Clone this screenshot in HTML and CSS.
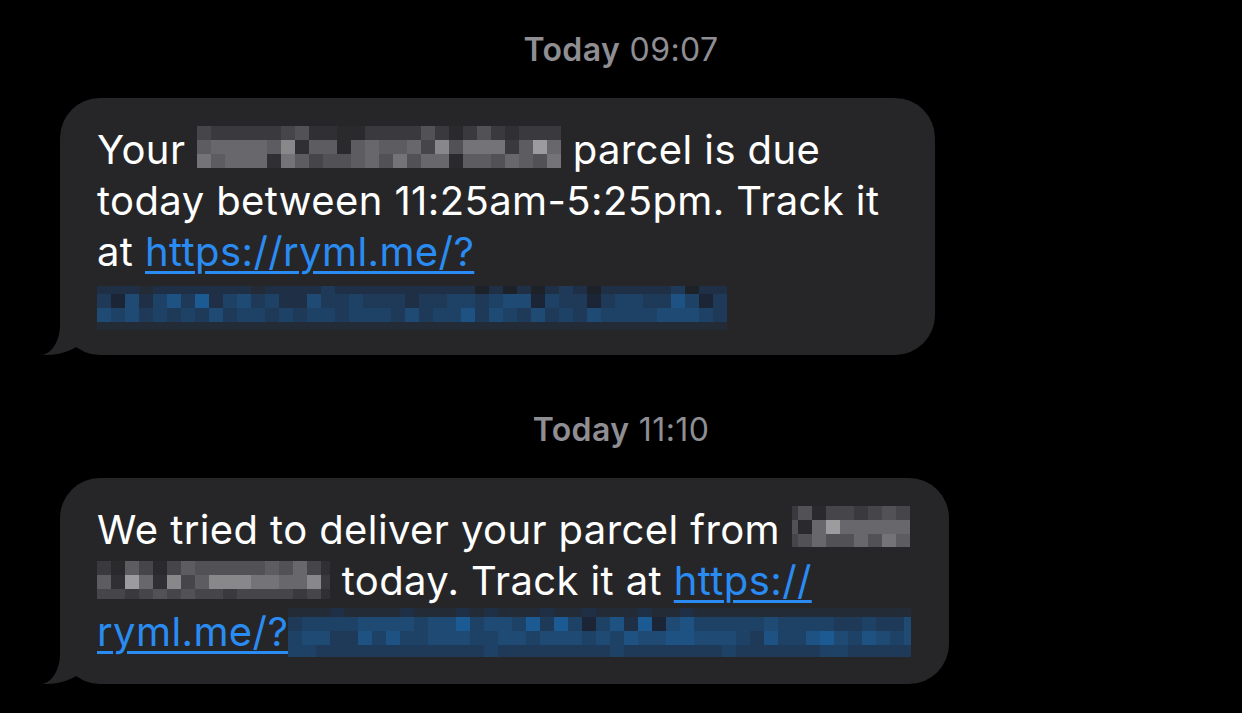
FILE: index.html
```html
<!DOCTYPE html>
<html lang="en">
<head>
<meta charset="utf-8">
<title>Messages</title>
<link rel="stylesheet" href="styles.css">
</head>
<body>
<main class="thread">
  <p class="stamp"><b>Today</b> 09:07</p>
  <div class="bubble bubble-a">
    <p class="msg">Your <span class="mosaic m1"><span class="cells"><i class="g3"></i><i class="g2"></i><i class="g2"></i><i class="g2"></i><i class="g2"></i><i class="g2"></i><i class="g3"></i><i class="g4"></i><i class="g1"></i><i class="g1"></i><i class="g0"></i><i class="g0"></i><i class="g2"></i><i class="g2"></i><i class="g2"></i><i class="g2"></i><i class="g4"></i><i class="g2"></i><i class="g0"></i><i class="g2"></i><i class="g4"></i><i class="g2"></i><i class="g1"></i><i class="g2"></i><i class="g2"></i><i class="g2"></i><i class="g5"></i><i class="g6"></i><i class="g6"></i><i class="g6"></i><i class="g6"></i><i class="g5"></i><i class="g8"></i><i class="g1"></i><i class="g5"></i><i class="g5"></i><i class="g0"></i><i class="g5"></i><i class="g6"></i><i class="g5"></i><i class="g5"></i><i class="g6"></i><i class="g3"></i><i class="g8"></i><i class="g4"></i><i class="g7"></i><i class="g7"></i><i class="g7"></i><i class="g2"></i><i class="g5"></i><i class="g9"></i><i class="g6"></i><i class="g7"></i><i class="g5"></i><i class="g6"></i><i class="g6"></i><i class="g6"></i><i class="g1"></i><i class="g7"></i><i class="g5"></i><i class="g3"></i><i class="g4"></i><i class="g4"></i><i class="g5"></i><i class="g6"></i><i class="g4"></i><i class="g7"></i><i class="g4"></i><i class="g6"></i><i class="g6"></i><i class="g0"></i><i class="g5"></i><i class="g5"></i><i class="g4"></i><i class="g6"></i><i class="g5"></i><i class="g4"></i><i class="g7"></i></span></span> parcel is due<br>today between 11:25am-5:25pm. Track it<br>at <a class="link" href="#">https://ryml.me/?</a><br><span class="mosaic m2"><span class="cells"><i class="b1"></i><i class="b1"></i><i class="b1"></i><i class="b0"></i><i class="b1"></i><i class="b1"></i><i class="b1"></i><i class="b1"></i><i class="b1"></i><i class="b1"></i><i class="b1"></i><i class="b0"></i><i class="b1"></i><i class="b1"></i><i class="b1"></i><i class="b1"></i><i class="b2"></i><i class="b1"></i><i class="b1"></i><i class="b1"></i><i class="b1"></i><i class="b1"></i><i class="b1"></i><i class="b1"></i><i class="b1"></i><i class="b1"></i><i class="b1"></i><i class="b7"></i><i class="b1"></i><i class="b7"></i><i class="b1"></i><i class="b7"></i><i class="b1"></i><i class="b2"></i><i class="b1"></i><i class="b7"></i><i class="b1"></i><i class="b1"></i><i class="b1"></i><i class="b1"></i><i class="b1"></i><i class="b2"></i><i class="b7"></i><i class="b1"></i><i class="b1"></i><i class="b2"></i><i class="b8"></i><i class="b4"></i><i class="b1"></i><i class="b3"></i><i class="b5"></i><i class="b2"></i><i class="b6"></i><i class="b1"></i><i class="b3"></i><i class="b4"></i><i class="b2"></i><i class="b3"></i><i class="b1"></i><i class="b1"></i><i class="b4"></i><i class="b2"></i><i class="b2"></i><i class="b3"></i><i class="b2"></i><i class="b2"></i><i class="b2"></i><i class="b1"></i><i class="b2"></i><i class="b2"></i><i class="b3"></i><i class="b3"></i><i class="b2"></i><i class="b3"></i><i class="b4"></i><i class="b4"></i><i class="b8"></i><i class="b3"></i><i class="b2"></i><i class="b2"></i><i class="b8"></i><i class="b2"></i><i class="b3"></i><i class="b3"></i><i class="b2"></i><i class="b2"></i><i class="b5"></i><i class="b3"></i><i class="b8"></i><i class="b2"></i><i class="b4"></i><i class="b3"></i><i class="b4"></i><i class="b2"></i><i class="b3"></i><i class="b2"></i><i class="b3"></i><i class="b2"></i><i class="b4"></i><i class="b2"></i><i class="b3"></i><i class="b3"></i><i class="b2"></i><i class="b3"></i><i class="b2"></i><i class="b3"></i><i class="b3"></i><i class="b2"></i><i class="b3"></i><i class="b3"></i><i class="b3"></i><i class="b2"></i><i class="b4"></i><i class="b2"></i><i class="b3"></i><i class="b3"></i><i class="b5"></i><i class="b2"></i><i class="b4"></i><i class="b3"></i><i class="b2"></i><i class="b4"></i><i class="b2"></i><i class="b3"></i><i class="b2"></i><i class="b4"></i><i class="b3"></i><i class="b3"></i><i class="b3"></i><i class="b3"></i><i class="b4"></i><i class="b4"></i><i class="b4"></i><i class="b3"></i><i class="b2"></i><i class="b0"></i><i class="b0"></i><i class="b0"></i><i class="b0"></i><i class="b0"></i><i class="b0"></i><i class="b0"></i><i class="b0"></i><i class="b0"></i><i class="b0"></i><i class="b0"></i><i class="b0"></i><i class="b0"></i><i class="b0"></i><i class="b0"></i><i class="b0"></i><i class="b0"></i><i class="b0"></i><i class="b0"></i><i class="b0"></i><i class="b0"></i><i class="b0"></i><i class="b0"></i><i class="b0"></i><i class="b0"></i><i class="b0"></i><i class="b0"></i><i class="b0"></i><i class="b0"></i><i class="b0"></i><i class="b0"></i><i class="b0"></i><i class="b0"></i><i class="b0"></i><i class="b0"></i><i class="b0"></i><i class="b0"></i><i class="b0"></i><i class="b0"></i><i class="b0"></i><i class="b0"></i><i class="b0"></i><i class="b0"></i><i class="b0"></i><i class="b0"></i></span></span></p>
    <svg class="tail" viewBox="0 0 60 50" aria-hidden="true"><path d="M17 0 L17 20 C17 35 10 47 0 50 C12 50.5 26 47 33 42 L33 0 Z"/></svg>
  </div>

  <p class="stamp later"><b>Today</b> 11:10</p>
  <div class="bubble bubble-b">
    <p class="msg">We tried to deliver your parcel from <span class="mosaic m3"><span class="cells"><i class="g2"></i><i class="g4"></i><i class="g0"></i><i class="g3"></i><i class="g3"></i><i class="g2"></i><i class="g3"></i><i class="g4"></i><i class="g3"></i><i class="g4"></i><i class="g0"></i><i class="g6"></i><i class="g9"></i><i class="g6"></i><i class="g6"></i><i class="g6"></i><i class="g6"></i><i class="g6"></i><i class="g3"></i><i class="g4"></i><i class="g6"></i><i class="g4"></i><i class="g4"></i><i class="g6"></i><i class="g4"></i><i class="g7"></i><i class="g5"></i></span></span><br><span class="mosaic m4"><span class="cells"><i class="g2"></i><i class="g0"></i><i class="g5"></i><i class="g3"></i><i class="g0"></i><i class="g3"></i><i class="g5"></i><i class="g4"></i><i class="g4"></i><i class="g4"></i><i class="g4"></i><i class="g4"></i><i class="g5"></i><i class="g4"></i><i class="g6"></i><i class="g3"></i><i class="g1"></i><i class="g5"></i><i class="g1"></i><i class="g9"></i><i class="g6"></i><i class="g1"></i><i class="g8"></i><i class="g3"></i><i class="g5"></i><i class="g8"></i><i class="g8"></i><i class="g8"></i><i class="g7"></i><i class="g7"></i><i class="g6"></i><i class="g6"></i><i class="g8"></i><i class="g2"></i><i class="g3"></i><i class="g3"></i><i class="g2"></i><i class="g3"></i><i class="g4"></i><i class="g3"></i><i class="g4"></i><i class="g3"></i><i class="g3"></i><i class="g2"></i><i class="g3"></i><i class="g3"></i><i class="g3"></i><i class="g3"></i><i class="g2"></i><i class="g3"></i><i class="g1"></i></span></span> today. Track it at <a class="link" href="#">https://</a><br><a class="link" href="#">ryml.me/?</a><span class="mosaic m5"><span class="cells"><i class="b0"></i><i class="b0"></i><i class="b0"></i><i class="b1"></i><i class="b0"></i><i class="b0"></i><i class="b0"></i><i class="b0"></i><i class="b1"></i><i class="b0"></i><i class="b0"></i><i class="b0"></i><i class="b1"></i><i class="b0"></i><i class="b1"></i><i class="b0"></i><i class="b0"></i><i class="b0"></i><i class="b1"></i><i class="b0"></i><i class="b0"></i><i class="b1"></i><i class="b0"></i><i class="b0"></i><i class="b0"></i><i class="b1"></i><i class="b0"></i><i class="b0"></i><i class="b1"></i><i class="b0"></i><i class="b0"></i><i class="b0"></i><i class="b0"></i><i class="b0"></i><i class="b0"></i><i class="b0"></i><i class="b0"></i><i class="b0"></i><i class="b0"></i><i class="b0"></i><i class="b0"></i><i class="b0"></i><i class="b0"></i><i class="b0"></i><i class="b0"></i><i class="b2"></i><i class="b3"></i><i class="b3"></i><i class="b3"></i><i class="b3"></i><i class="b4"></i><i class="b4"></i><i class="b4"></i><i class="b4"></i><i class="b3"></i><i class="b4"></i><i class="b4"></i><i class="b6"></i><i class="b3"></i><i class="b4"></i><i class="b4"></i><i class="b3"></i><i class="b6"></i><i class="b2"></i><i class="b6"></i><i class="b3"></i><i class="b8"></i><i class="b3"></i><i class="b5"></i><i class="b1"></i><i class="b6"></i><i class="b8"></i><i class="b4"></i><i class="b5"></i><i class="b3"></i><i class="b3"></i><i class="b3"></i><i class="b3"></i><i class="b3"></i><i class="b4"></i><i class="b3"></i><i class="b3"></i><i class="b3"></i><i class="b3"></i><i class="b2"></i><i class="b2"></i><i class="b3"></i><i class="b2"></i><i class="b2"></i><i class="b4"></i><i class="b3"></i><i class="b4"></i><i class="b4"></i><i class="b2"></i><i class="b2"></i><i class="b5"></i><i class="b3"></i><i class="b5"></i><i class="b3"></i><i class="b3"></i><i class="b4"></i><i class="b4"></i><i class="b4"></i><i class="b3"></i><i class="b3"></i><i class="b4"></i><i class="b4"></i><i class="b3"></i><i class="b4"></i><i class="b4"></i><i class="b4"></i><i class="b3"></i><i class="b4"></i><i class="b3"></i><i class="b5"></i><i class="b4"></i><i class="b4"></i><i class="b5"></i><i class="b5"></i><i class="b4"></i><i class="b4"></i><i class="b4"></i><i class="b3"></i><i class="b2"></i><i class="b5"></i><i class="b3"></i><i class="b3"></i><i class="b5"></i><i class="b6"></i><i class="b4"></i><i class="b3"></i><i class="b5"></i><i class="b4"></i><i class="b3"></i><i class="b4"></i><i class="b3"></i><i class="b3"></i><i class="b2"></i><i class="b2"></i><i class="b2"></i><i class="b2"></i><i class="b2"></i><i class="b2"></i><i class="b2"></i><i class="b2"></i><i class="b2"></i><i class="b2"></i><i class="b2"></i><i class="b2"></i><i class="b3"></i><i class="b2"></i><i class="b2"></i><i class="b2"></i><i class="b2"></i><i class="b2"></i><i class="b2"></i><i class="b2"></i><i class="b2"></i><i class="b3"></i><i class="b2"></i><i class="b2"></i><i class="b2"></i><i class="b2"></i><i class="b2"></i><i class="b2"></i><i class="b2"></i><i class="b3"></i><i class="b2"></i><i class="b2"></i><i class="b2"></i><i class="b2"></i><i class="b2"></i><i class="b2"></i><i class="b3"></i><i class="b3"></i><i class="b2"></i><i class="b2"></i><i class="b2"></i><i class="b2"></i><i class="b2"></i></span></span></p>
    <svg class="tail" viewBox="0 0 60 50" aria-hidden="true"><path d="M17 0 L17 20 C17 35 10 47 0 50 C12 50.5 26 47 33 42 L33 0 Z"/></svg>
  </div>
</main>
</body>
</html>
```

FILE: styles.css
```css
html, body {
  margin: 0;
  background: #000;
}

body {
  font-family: Inter, "Noto Sans", "Liberation Sans", sans-serif;
  -webkit-font-smoothing: antialiased;
}

.thread {
  display: flex;
  flex-direction: column;
  align-items: flex-start;
  padding-top: 30px;
  height: 713px;
  box-sizing: border-box;
  overflow: hidden;
}

.stamp {
  align-self: stretch;
  margin: 0 0 28px;
  text-align: center;
  font-size: 32px;
  line-height: 40px;
  letter-spacing: 0.4px;
  color: #8e8e93;
}

.stamp b {
  font-weight: 600;
}

.stamp.later {
  margin-top: 55px;
}

.bubble {
  position: relative;
  margin-left: 60px;
  box-sizing: border-box;
  padding: 26px 37px 25px;
  background: #262628;
  border-radius: 40px;
}

.bubble-a {
  width: 875px;
}

.bubble-b {
  width: 889px;
  padding-bottom: 27px;
}

.msg {
  margin: 0;
  font-size: 40px;
  line-height: 51px;
  color: #fff;
  white-space: nowrap;
  letter-spacing: 0.4px;
}

.link {
  color: #2a8cf2;
  text-decoration: underline;
  text-decoration-thickness: 3px;
  text-underline-offset: 5px;
}

.tail {
  position: absolute;
  left: -17px;
  bottom: 0;
  width: 60px;
  height: 50px;
  fill: #262628;
}

/* pixelated redactions */
.mosaic {
  display: inline-block;
  overflow: hidden;
  letter-spacing: 0;
}

.cells {
  display: grid;
}

.cells i {
  display: block;
}

.m1 { vertical-align: -4px; }
.m1 .cells {
  grid-template-columns: repeat(26, 14px);
  grid-template-rows: 14px 14px 14px;
}

.m2 { vertical-align: -13px; }
.m2 .cells {
  grid-template-columns: repeat(45, 14px);
  grid-template-rows: 8px 14px 14px 8px;
}

.m3 { vertical-align: -3px; }
.m3 .cells {
  grid-template-columns: 6px repeat(8, 14px);
  grid-template-rows: 14px 14px 13px;
}

.m4 { vertical-align: -4px; }
.m4 .cells {
  grid-template-columns: repeat(16, 14px) 9px;
  grid-template-rows: 14px 14px 10px;
}

.m5 { vertical-align: -11px; }
.m5 .cells {
  grid-template-columns: repeat(44, 14px) 7px;
  grid-template-rows: 9px 14px 14px 12px;
}

.g0 { background: #2a2a2d; }
.g1 { background: #303034; }
.g2 { background: #3a3a3e; }
.g3 { background: #46464a; }
.g4 { background: #525256; }
.g5 { background: #5d5d61; }
.g6 { background: #68686c; }
.g7 { background: #747478; }
.g8 { background: #88888b; }
.g9 { background: #9c9c9e; }

.b0 { background: #232b37; }
.b1 { background: #1f3046; }
.b2 { background: #1f3a58; }
.b3 { background: #1e4266; }
.b4 { background: #1e4a74; }
.b5 { background: #1d5282; }
.b6 { background: #1c5a93; }
.b7 { background: #1d2128; }
.b8 { background: #1b2535; }
```
